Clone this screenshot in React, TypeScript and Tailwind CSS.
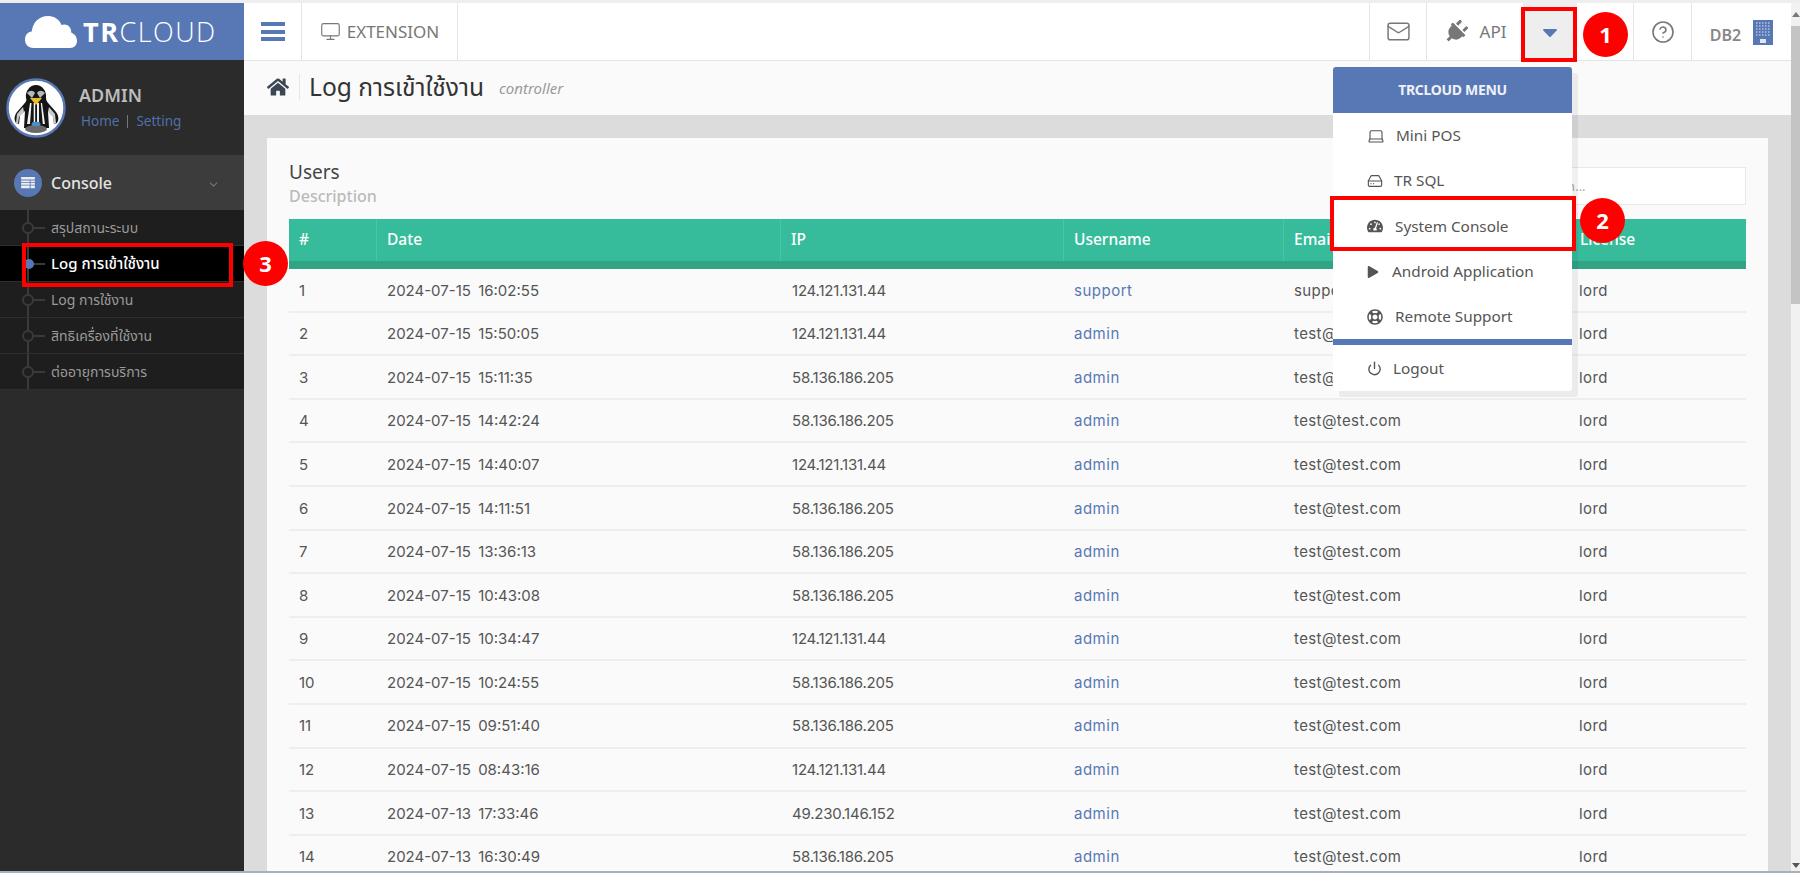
import { ChevronDown, CircleHelp, HardDrive, Laptop, Mail, Monitor, Power } from 'lucide-react'
import { FaCaretDown, FaHome, FaPlay, FaPlug, FaRegLifeRing, FaTachometerAlt } from 'react-icons/fa'

const fontStack = '[font-family:"Noto_Sans","Noto_Sans_Thai",Tahoma,sans-serif]'

const rows = [
  ['1', '2024-07-15', '16:02:55', '124.121.131.44', 'support', 'support@test.com'],
  ['2', '2024-07-15', '15:50:05', '124.121.131.44', 'admin', 'test@test.com'],
  ['3', '2024-07-15', '15:11:35', '58.136.186.205', 'admin', 'test@test.com'],
  ['4', '2024-07-15', '14:42:24', '58.136.186.205', 'admin', 'test@test.com'],
  ['5', '2024-07-15', '14:40:07', '124.121.131.44', 'admin', 'test@test.com'],
  ['6', '2024-07-15', '14:11:51', '58.136.186.205', 'admin', 'test@test.com'],
  ['7', '2024-07-15', '13:36:13', '58.136.186.205', 'admin', 'test@test.com'],
  ['8', '2024-07-15', '10:43:08', '58.136.186.205', 'admin', 'test@test.com'],
  ['9', '2024-07-15', '10:34:47', '124.121.131.44', 'admin', 'test@test.com'],
  ['10', '2024-07-15', '10:24:55', '58.136.186.205', 'admin', 'test@test.com'],
  ['11', '2024-07-15', '09:51:40', '58.136.186.205', 'admin', 'test@test.com'],
  ['12', '2024-07-15', '08:43:16', '124.121.131.44', 'admin', 'test@test.com'],
  ['13', '2024-07-13', '17:33:46', '49.230.146.152', 'admin', 'test@test.com'],
  ['14', '2024-07-13', '16:30:49', '58.136.186.205', 'admin', 'test@test.com'],
]

const subMenu = ['สรุปสถานะระบบ', 'Log การเข้าใช้งาน', 'Log การใช้งาน', 'สิทธิเครื่องที่ใช้งาน', 'ต่ออายุการบริการ']

function Avatar() {
  return (
    <svg viewBox="0 0 60 60" className="h-[60px] w-[60px] shrink-0">
      <circle cx="30" cy="30" r="28.5" fill="#fff" stroke="#5878b5" strokeWidth="2.5" />
      {/* penguin body and arms */}
      <path d="M20 20c-1-7 4-13 10-13s11 6 10 13c0 2 1 4 3 6l7 8c3 4 3 8 1 11l-3 1-1-9-5-4 1 17H18l1-17-5 4-1 9-3-1c-2-3-2-7 1-11l7-8c2-2 3-4 2-6z" fill="#141414" />
      <path d="M11 36l6-7 1 5-5 5-1 7-2-1zM49 36l-6-7-1 5 5 5 1 7 2-1z" fill="#c9c9c9" />
      <path d="M24 25h12l3 21H21z" fill="#f2f2f2" />
      <path d="M25.500 25h2.200v21h-3.700zM29.200 25h1.800v21h-1.800zM33 25h1.800l2 21H33z" fill="#141414" />
      <ellipse cx="30" cy="51" rx="11" ry="4" fill="#6a6a6a" />
      <ellipse cx="30" cy="46" rx="4.500" ry="2.300" fill="#4a90c8" />
      <path d="M21 15c3-3 6-3 8 0l-3 5zM39 15c-3-3-6-3-8 0l3 5z" fill="#b8b8b8" />
      <path d="M24 20h12l-6 7z" fill="#e8bd2a" />
    </svg>
  )
}

function Sidebar() {
  return (
    <aside className="flex w-[244px] shrink-0 flex-col bg-[#2b2b2b]">
      <div className="flex h-[57px] items-center bg-[#5878b5] pl-[25px] text-white">
        <svg viewBox="0 0 54 32" className="h-[32px] w-[52px]" fill="#fff" preserveAspectRatio="none">
          <path d="M9 32C3 32 0 28 0 23.500C0 19 3 16 7 15.500C8 7 14 0 24 0C31 0 36 4 38 9C40 8 45 8 47 12C48 14 48 16 48 16.500C52 18 54 21 54 25C54 29 51 32 47 32Z" />
        </svg>
        <div className="ml-[6px] text-[27px] leading-none tracking-[1.500px] [font-family:'Open_Sans',sans-serif]">
          <span className="font-bold">TR</span>
          <span className="font-light">CLOUD</span>
        </div>
      </div>

      <div className="flex h-[95px] items-center pl-[6px]">
        <Avatar />
        <div className="ml-[13px] mt-[-2px]">
          <div className="text-[18px] font-semibold leading-[24px] text-[#bdbdbd]">ADMIN</div>
          <div className="mt-[5px] flex items-center pl-[2px] text-[13.500px] leading-[18px] text-[#4f70a8]">
            <span>Home</span>
            <span className="mx-[8px] h-[13px] w-px bg-[#777]" />
            <span>Setting</span>
          </div>
        </div>
      </div>

      <div className="flex h-[55px] items-center bg-[#3c3c3c] pl-[14px] pr-[24px]">
        <span className="flex h-[28px] w-[28px] items-center justify-center rounded-full bg-[#5878b5]">
          <svg viewBox="0 0 16 14" className="h-[12px] w-[14px]" fill="#eee">
            <path d="M0 0h16v3H0zM0 4h10v2H0zM11 4h5v2h-5zM0 7h10v2H0zM11 7h5v2h-5zM0 10h10v3H0zM11 10h5v3h-5z" />
          </svg>
        </span>
        <span className="ml-[9px] flex-1 text-[16px] font-medium text-[#e4e4e4]">Console</span>
        <ChevronDown size={13} className="mt-[3px] text-[#777]" />
      </div>

      <div className="bg-[#1e1e1e]">
        {subMenu.map((label, i) => {
          const active = i === 1
          return (
            <div
              key={label}
              className={`relative flex h-[36px] items-center border-b border-[#2f2f2f] pl-[51px] ${
                active ? 'bg-black text-[15px] font-medium text-white' : 'text-[14px] text-[#9a9a9a]'
              }`}
            >
              <span className="absolute bottom-0 left-[27px] top-0 w-[2px] bg-[#3a3a3a]" />
              <span className="absolute left-[29px] top-[17px] h-[2px] w-[16px] bg-[#3a3a3a]" />
              <span
                className={`absolute rounded-full ${
                  active
                    ? 'left-[24px] top-[13px] h-[10px] w-[10px] bg-[#5878b5]'
                    : 'left-[22px] top-[12px] h-[12px] w-[12px] border-2 border-[#3a3a3a] bg-[#1e1e1e]'
                }`}
              />
              {label}
            </div>
          )
        })}
      </div>
    </aside>
  )
}

function TopBar() {
  return (
    <header className="flex h-[58px] shrink-0 items-stretch border-b border-[#e4e4e4] bg-white text-[#777]">
      <div className="flex w-[58px] items-center justify-center border-r border-[#e4e4e4]">
        <div className="flex h-[19px] w-[24px] flex-col justify-between">
          <span className="h-[4px] bg-[#5878b5]" />
          <span className="h-[4px] bg-[#5878b5]" />
          <span className="h-[4px] bg-[#5878b5]" />
        </div>
      </div>
      <div className="flex w-[156px] items-center justify-center gap-[6px] border-r border-[#e4e4e4] text-[17px]">
        <Monitor size={21} strokeWidth={1.3} />
        EXTENSION
      </div>
      <div className="flex-1" />
      <div className="flex w-[58px] items-center justify-center border-x border-[#e4e4e4]">
        <Mail size={25} strokeWidth={1.4} />
      </div>
      <div className="flex w-[96px] items-center justify-center gap-[12px] text-[17px]">
        <FaPlug size={24} className="rotate-45" />
        API
      </div>
      <div className="flex w-[54px] items-center justify-center bg-[#eeeeee] text-[#5878b5]">
        <FaCaretDown size={24} />
      </div>
      <div className="w-[57px] border-r border-[#e4e4e4]" />
      <div className="flex w-[58px] items-center justify-center border-r border-[#e4e4e4]">
        <CircleHelp size={24} strokeWidth={1.6} />
      </div>
      <div className="flex max-w-[99px] flex-1 items-center justify-center gap-[12px] text-[16px] font-semibold text-[#888]">
        <span className="mt-[6px]">DB2</span>
        <svg viewBox="0 0 20 25" className="mt-[2px] h-[25px] w-[20px]">
          <rect width="20" height="25" fill="#5878b5" />
          <path d="M3 3h14M3 6h14M3 9h14M3 12h14M3 15h14" stroke="#dfe6f2" strokeWidth="1.200" strokeDasharray="1.500 1.500" />
          <rect x="7" y="19" width="6" height="4" fill="#dfe6f2" />
        </svg>
      </div>
    </header>
  )
}

function UsersTable() {
  const grid = 'grid grid-cols-[88px_404px_283px_220px_286px_176px]'
  const headers = ['#', 'Date', 'IP', 'Username', 'Email', 'License']
  return (
    <div>
      <div className={`${grid} h-[50px] border-b-[8px] border-[#31a486] bg-[#37bc9b] text-[15.500px] font-medium text-white`}>
        {headers.map((h, i) => (
          <div key={h} className={`flex items-center pl-[10px] ${i < 5 ? 'border-r border-[#4ac5a7]' : ''}`}>
            {h}
          </div>
        ))}
      </div>
      {rows.map(r => (
        <div
          key={r[0]}
          className={`${grid} h-[43.600px] border-b-2 border-[#eeeeee] pt-[2px] text-[15px] text-[#555] [font-family:Inter,sans-serif]`}
        >
          <div className="flex items-center pl-[10px]">{r[0]}</div>
          <div className="flex items-center pl-[10px] [word-spacing:3px]">{r[1]} {r[2]}</div>
          <div className="flex items-center pl-[11px] tracking-[-0.2px]">{r[3]}</div>
          <div className="flex items-center pl-[10px] tracking-[0.5px] text-[#5878b5]">{r[4]}</div>
          <div className="flex items-center pl-[10px] tracking-[0.4px]">{r[5]}</div>
          <div className="flex items-center pl-[9px] tracking-[0.4px]">lord</div>
        </div>
      ))}
    </div>
  )
}

function Scrollbar() {
  return (
    <div className="flex w-[9px] shrink-0 flex-col items-center bg-[#f1f1f1]">
      <div className="flex h-[23px] items-center justify-center">
        <span className="h-0 w-0 border-x-[4px] border-b-[5px] border-x-transparent border-b-[#777]" />
      </div>
      <div className="h-[278px] w-full bg-[#c4c4c4]" />
      <div className="flex-1" />
      <div className="flex h-[12px] items-center justify-center">
        <span className="h-0 w-0 border-x-[4px] border-t-[5px] border-x-transparent border-t-[#555]" />
      </div>
    </div>
  )
}

function MenuItem({ icon, label, gap }: { icon: React.ReactNode; label: string; gap: string }) {
  return (
    <div className={`flex h-[45.300px] items-center pl-[34px] text-[15.300px] text-[#555] ${gap}`}>
      {icon}
      {label}
    </div>
  )
}

function Dropdown() {
  return (
    <div className="absolute left-[1333px] top-[67px] w-[239px] rounded-[3px] bg-white shadow-[6px_6px_0_rgba(0,0,0,0.06)]">
      <div className="flex h-[46px] items-center justify-center rounded-t-[3px] bg-[#5878b5] pb-[2px] text-[14px] font-bold tracking-[-0.3px] text-[#eef2f8]">
        TRCLOUD MENU
      </div>
      <div>
        <MenuItem icon={<Laptop size={18} strokeWidth={1.5} />} label="Mini POS" gap="gap-[11px]" />
        <MenuItem icon={<HardDrive size={16} strokeWidth={1.7} />} label="TR SQL" gap="gap-[11px]" />
        <MenuItem icon={<FaTachometerAlt size={16} />} label="System Console" gap="gap-[12px]" />
        <MenuItem icon={<FaPlay size={12} />} label="Android Application" gap="gap-[13px]" />
        <MenuItem icon={<FaRegLifeRing size={16} />} label="Remote Support" gap="gap-[12px]" />
      </div>
      <div className="h-[6px] bg-[#5878b5]" />
      <MenuItem icon={<Power size={15} strokeWidth={2.2} />} label="Logout" gap="gap-[11px]" />
    </div>
  )
}

function Badge({ n, className }: { n: number; className: string }) {
  return (
    <div className={`absolute flex h-[45px] w-[45px] items-center justify-center rounded-full bg-[#ff0000] text-[22px] font-bold text-white ${className}`}>
      {n}
    </div>
  )
}

export default function App() {
  return (
    <div className={`relative flex h-[873px] w-[1800px] flex-col overflow-hidden bg-[#eeeeee] ${fontStack}`}>
      <div className="h-[3px] shrink-0" />
      <div className="flex min-h-0 flex-1">
        <Sidebar />
        <div className="flex min-w-0 flex-1">
          <div className="flex min-w-0 flex-1 flex-col bg-[#dcdcdc]">
            <TopBar />
            <div className="flex h-[54px] shrink-0 items-center bg-[#fafafa] pb-[2px] pl-[23px]">
              <FaHome size={22} className="text-[#3d4654]" />
              <span className="ml-[10px] h-[26px] w-px bg-[#e6e6e6]" />
              <span className="ml-[9px] text-[24.600px] text-[#333]">Log การเข้าใช้งาน</span>
              <span className="ml-[15px] mt-[3px] text-[15px] italic text-[#999]">controller</span>
            </div>
            <div className="min-h-0 flex-1 px-[23px] pt-[23px]">
              <div className="bg-[#fafafa] px-[22px] pt-[22px]">
                <div className="flex h-[59px] justify-between">
                  <div>
                    <div className="text-[19px] leading-[24px] text-[#444]">Users</div>
                    <div className="mt-[2px] text-[16px] font-medium leading-[20px] text-[#bbb]">Description</div>
                  </div>
                  <input
                    placeholder="Search..."
                    className="mt-[7px] h-[38px] w-[245px] border border-[#e8e8e8] bg-white pl-[32px] text-[13px] placeholder:text-[#aaa]"
                  />
                </div>
                <UsersTable />
              </div>
            </div>
          </div>
          <Scrollbar />
        </div>
      </div>
      <div className="h-[2px] shrink-0 bg-[#a9b0bd]" />

      <Dropdown />

      <div className="absolute left-[1521px] top-[7px] h-[55px] w-[56px] border-[4px] border-[#ff0000]" />
      <div className="absolute left-[1330px] top-[196px] h-[55px] w-[246px] border-[4px] border-[#ff0000]" />
      <div className="absolute left-[22px] top-[243px] h-[44px] w-[211px] border-[4px] border-[#ff0000]" />
      <Badge n={1} className="left-[1583px] top-[12px]" />
      <Badge n={2} className="left-[1580px] top-[198px]" />
      <Badge n={3} className="left-[243px] top-[241px]" />
    </div>
  )
}
